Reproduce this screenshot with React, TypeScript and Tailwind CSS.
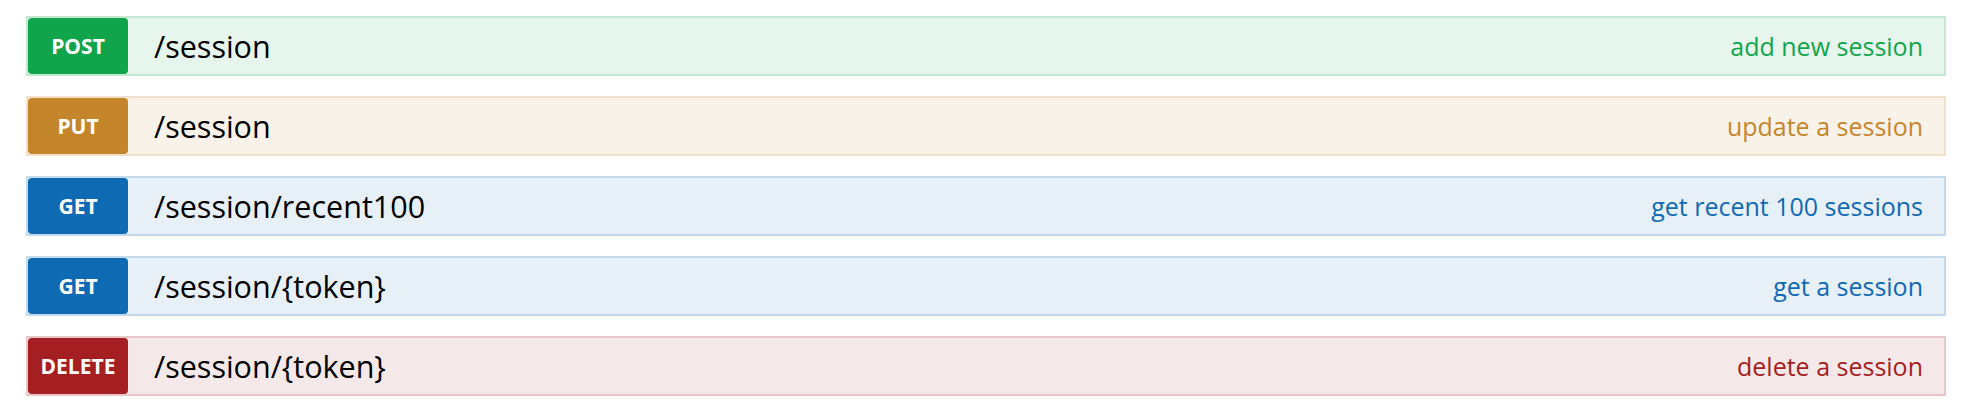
const ops = [
  {
    method: "POST",
    path: "/session",
    summary: "add new session",
    row: "border-[#c3e8d1] bg-[#e7f6ec]",
    badge: "bg-[#10a54a]",
    text: "text-[#10a54a]",
  },
  {
    method: "PUT",
    path: "/session",
    summary: "update a session",
    row: "border-[#f0e0ca] bg-[#f9f2e9]",
    badge: "bg-[#c5862b]",
    text: "text-[#c5862b]",
  },
  {
    method: "GET",
    path: "/session/recent100",
    summary: "get recent 100 sessions",
    row: "border-[#c3d9ec] bg-[#e7f0f7]",
    badge: "bg-[#0f6ab4]",
    text: "text-[#0f6ab4]",
  },
  {
    method: "GET",
    path: "/session/{token}",
    summary: "get a session",
    row: "border-[#c3d9ec] bg-[#e7f0f7]",
    badge: "bg-[#0f6ab4]",
    text: "text-[#0f6ab4]",
  },
  {
    method: "DELETE",
    path: "/session/{token}",
    summary: "delete a session",
    row: "border-[#e8c6c7] bg-[#f5e8e8]",
    badge: "bg-[#a41e22]",
    text: "text-[#a41e22]",
  },
];

export default function App() {
  return (
    <div className="w-[1962px] h-[410px] bg-white pl-[26px] pr-[16px] pt-[16px] flex flex-col gap-[20px] font-['Open_Sans',sans-serif]">
      {ops.map((op, i) => (
        <div key={i} className={`flex items-center h-[60px] border-2 ${op.row}`}>
          <span
            className={`w-[100px] h-full shrink-0 rounded-[4px] pt-[2px] flex items-center justify-center text-white font-bold text-[21px] ${op.badge}`}
          >
            {op.method}
          </span>
          <span className="ml-[26px] text-[30.5px] text-black leading-none">{op.path}</span>
          <span className={`ml-auto mr-[21px] text-[25px] leading-none ${op.text}`}>{op.summary}</span>
        </div>
      ))}
    </div>
  );
}
